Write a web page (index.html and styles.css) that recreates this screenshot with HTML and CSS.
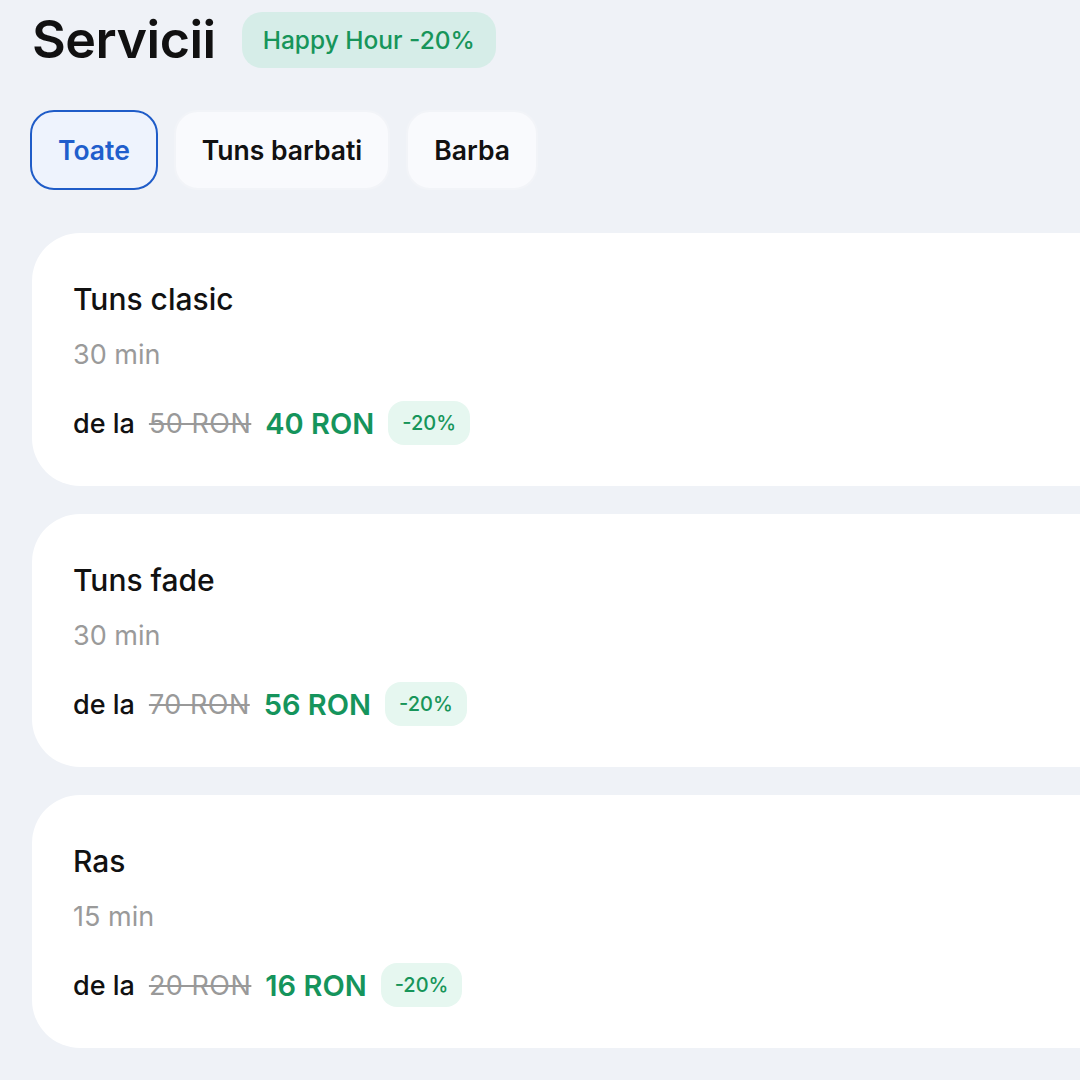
FILE: index.html
```html
<!DOCTYPE html>
<html lang="ro">
<head>
  <meta charset="UTF-8">
  <meta name="viewport" content="width=device-width, initial-scale=1.0">
  <title>Servicii</title>
  <link rel="stylesheet" href="styles.css">
</head>
<body>
  <section class="services">
    <header class="head">
      <h1>Servicii</h1>
      <span class="happy">Happy Hour -20%</span>
    </header>

    <div class="tabs">
      <button class="tab active">Toate</button>
      <button class="tab">Tuns barbati</button>
      <button class="tab">Barba</button>
    </div>

    <div class="list">
      <div class="card">
        <h3>Tuns clasic</h3>
        <div class="duration">30 min</div>
        <div class="price">
          <span class="from">de la</span>
          <span class="old">50 RON</span>
          <span class="new">40 RON</span>
          <span class="off">-20%</span>
        </div>
      </div>
      <div class="card">
        <h3>Tuns fade</h3>
        <div class="duration">30 min</div>
        <div class="price">
          <span class="from">de la</span>
          <span class="old">70 RON</span>
          <span class="new">56 RON</span>
          <span class="off">-20%</span>
        </div>
      </div>
      <div class="card">
        <h3>Ras</h3>
        <div class="duration">15 min</div>
        <div class="price">
          <span class="from">de la</span>
          <span class="old">20 RON</span>
          <span class="new">16 RON</span>
          <span class="off">-20%</span>
        </div>
      </div>
    </div>
  </section>
</body>
</html>
```

FILE: styles.css
```css
body {
  margin: 0;
  font-family: 'Inter', 'Noto Sans', sans-serif;
  background: #eff2f7;
  color: #111;
  overflow: hidden;
}

.services {
  padding: 12px 0 0 32px;
}

.head {
  display: flex;
  align-items: center;
  gap: 26px;
}

.head h1 {
  margin: 0;
  font-size: 52px;
  font-weight: 600;
  line-height: 56px;
  letter-spacing: -0.5px;
  color: #111;
}

.happy {
  background: #d6ede8;
  color: #17955a;
  font-size: 24.5px;
  font-weight: 500;
  padding: 0 21px;
  height: 56px;
  line-height: 56px;
  border-radius: 20px;
}

.tabs {
  display: flex;
  gap: 16px;
  margin-top: 42px;
  margin-left: -2px;
}

.tab {
  font-family: inherit;
  font-size: 26.5px;
  font-weight: 600;
  height: 80px;
  padding: 0 26px;
  border-radius: 24px;
  border: 2px solid #f2f4f8;
  background: #f9fafd;
  color: #111;
}

.tab.active {
  border-color: #1f5cc8;
  background: #eef3fd;
  color: #1f5ecc;
}

.list {
  display: flex;
  flex-direction: column;
  gap: 28px;
  margin-top: 43px;
  margin-right: -80px;
}

.card {
  background: #fff;
  border-radius: 48px;
  height: 253px;
  box-sizing: border-box;
  padding: 46px 41px 0;
}

.card h3 {
  margin: 0;
  font-size: 30px;
  font-weight: 500;
  line-height: 40px;
}

.duration {
  margin-top: 20px;
  font-size: 27px;
  color: #9a9a9a;
  line-height: 32px;
}

.price {
  display: flex;
  align-items: center;
  gap: 14px;
  margin-top: 30px;
  font-size: 27px;
}

.from {
  font-weight: 500;
}

.old {
  color: #999;
  text-decoration: line-through;
  letter-spacing: 0.5px;
}

.new {
  color: #15945c;
  font-weight: 600;
  font-size: 29px;
}

.off {
  background: #e6f7f0;
  color: #17955a;
  font-size: 20px;
  font-weight: 500;
  height: 44px;
  line-height: 44px;
  padding: 0 14px;
  border-radius: 16px;
}
```
